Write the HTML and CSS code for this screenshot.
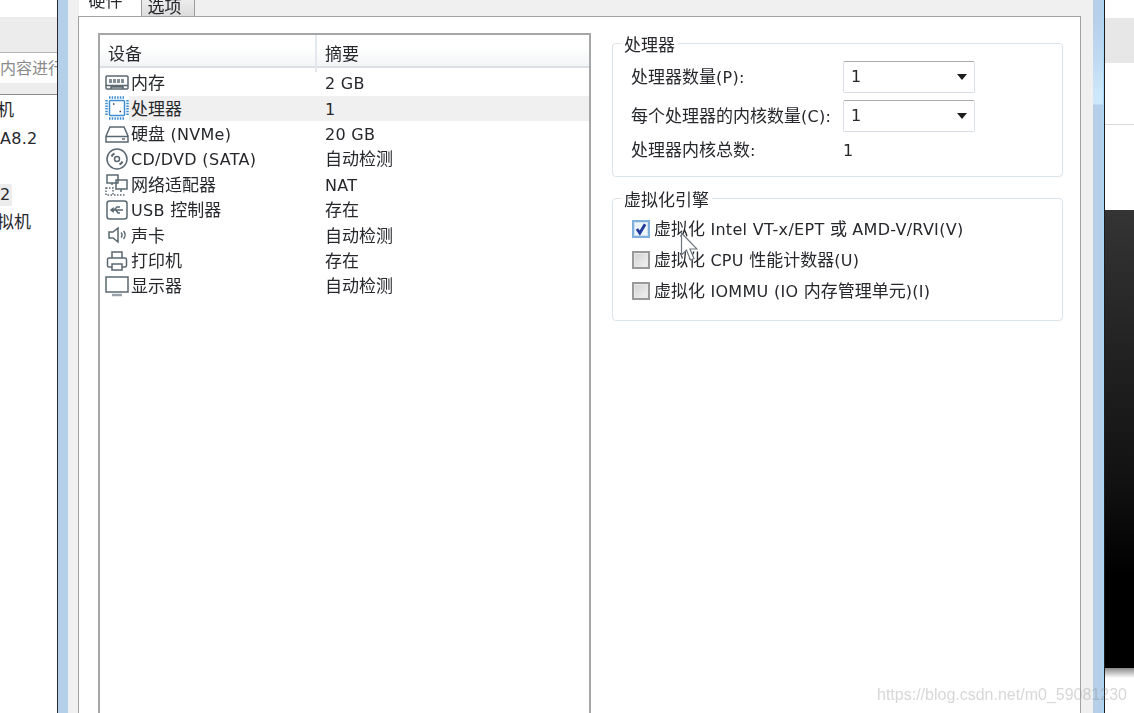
FILE: index.html
```html
<!DOCTYPE html>
<html lang="zh-CN">
<head>
<meta charset="utf-8">
<title>虚拟机设置</title>
<link rel="stylesheet" href="styles.css">
</head>
<body>
<div class="desktop">
  <aside class="left-win">
    <div class="lw-title"></div>
    <div class="lw-toolbar"></div>
    <div class="lw-search">内容进行</div>
    <div class="lw-strip"></div>
    <ul class="lw-tree">
      <li class="lw-clip">机</li>
      <li><span class="lat">A8.2</span></li>
      <li></li>
      <li><span class="lw-sel lat">2</span></li>
      <li class="lw-clip">拟机</li>
    </ul>
  </aside>

  <main class="dialog">
    <div class="dialog-inner">
      <div class="tabs">
        <div class="tab tab-active">硬件</div>
        <div class="tab tab-idle">选项</div>
      </div>
      <div class="page">
        <section class="list">
          <div class="list-head">
            <div class="hd hd-device">设备</div>
            <div class="hd hd-summary">摘要</div>
          </div>
          <div class="rows">
            <div class="row">
              <svg class="ico" viewBox="0 0 24 24"><rect x="1" y="5" width="22" height="13" rx="1"/><path d="M4 9h16M4 11h16" stroke-dasharray="3 1"/><path d="M1 14.500h22M6 18v-2h12v2"/></svg>
              <div class="cell name">内存</div><div class="cell"><span class="lat">2 GB</span></div>
            </div>
            <div class="row row-sel">
              <svg class="ico ico-blue" viewBox="0 0 24 24"><rect x="4.500" y="4.500" width="15" height="15" rx="1"/><path d="M4 1.500h16M4 22.500h16M1.500 4v16M22.500 4v16" stroke-width="2.500" stroke-dasharray="1.500 1.200"/><path d="M8 8h1.500M14.500 15.500h1.500" stroke="#33424d"/></svg>
              <div class="cell name">处理器</div><div class="cell"><span class="lat">1</span></div>
            </div>
            <div class="row">
              <svg class="ico" viewBox="0 0 24 24"><path d="M1 14 5 5h14l4 9v6H1zM1 14.500h22"/><path d="M17 17h3"/></svg>
              <div class="cell name">硬盘<span class="lat"> (NVMe)</span></div><div class="cell"><span class="lat">20 GB</span></div>
            </div>
            <div class="row">
              <svg class="ico" viewBox="0 0 24 24"><circle cx="12" cy="12" r="10"/><circle cx="12" cy="12" r="2.500"/><path d="M6.500 9.500a6 6 0 0 1 3-3M17.500 14.500a6 6 0 0 1-3 3" stroke-width="2"/></svg>
              <div class="cell name"><span class="lat">CD/DVD (SATA)</span></div><div class="cell">自动检测</div>
            </div>
            <div class="row">
              <svg class="ico" viewBox="0 0 24 24"><path d="M2 2h11v8H2zM7 10v2M11 7h11v9H11zM16 16v3"/><path d="M1 15h7v7H1zM9 22h12" stroke-dasharray="1.500 1.500"/></svg>
              <div class="cell name">网络适配器</div><div class="cell"><span class="lat">NAT</span></div>
            </div>
            <div class="row">
              <svg class="ico" viewBox="0 0 24 24"><rect x="2" y="3" width="20" height="18" rx="2.500"/><path d="M6 12h12M9 12l3-3h3M11 12l2 3h2M6 12l2-1.500v3z"/></svg>
              <div class="cell name"><span class="lat">USB </span>控制器</div><div class="cell">存在</div>
            </div>
            <div class="row">
              <svg class="ico" viewBox="0 0 24 24"><path d="M4 9h4l5-4v14l-5-4H4zM16 9.500a3.500 3.500 0 0 1 0 5M18.500 8a6 6 0 0 1 0 8"/></svg>
              <div class="cell name">声卡</div><div class="cell">自动检测</div>
            </div>
            <div class="row">
              <svg class="ico" viewBox="0 0 24 24"><path d="M7 9V3h10v6M7 18H4a1.500 1.500 0 0 1-1.500-1.500V10.500A1.500 1.500 0 0 1 4 9h16a1.500 1.500 0 0 1 1.500 1.500v6A1.500 1.500 0 0 1 20 18h-3M7 15h10v6H7z"/></svg>
              <div class="cell name">打印机</div><div class="cell">存在</div>
            </div>
            <div class="row">
              <svg class="ico" viewBox="0 0 24 24"><rect x="1" y="3" width="22" height="15"/><path d="M7 21h10" stroke-width="2.500" stroke="#9aa3aa"/></svg>
              <div class="cell name">显示器</div><div class="cell">自动检测</div>
            </div>
          </div>
        </section>

        <div class="side">
          <fieldset class="group group-cpu">
            <legend>处理器</legend>
            <div class="field">
              <span class="label">处理器数量<span class="lat">(P):</span></span>
              <div class="select"><span class="lat">1</span><i class="caret"></i></div>
            </div>
            <div class="field">
              <span class="label">每个处理器的内核数量<span class="lat">(C):</span></span>
              <div class="select"><span class="lat">1</span><i class="caret"></i></div>
            </div>
            <div class="field">
              <span class="label">处理器内核总数<span class="lat">:</span></span>
              <span class="lat">1</span>
            </div>
          </fieldset>

          <fieldset class="group group-virt">
            <legend>虚拟化引擎</legend>
            <div class="check">
              <span class="box box-on"><svg viewBox="0 0 12 12"><path d="M2.500 6 5 9.500 9.500 2"/></svg></span>
              <span>虚拟化<span class="lat"> Intel VT-x/EPT </span>或<span class="lat"> AMD-V/RVI(V)</span></span>
            </div>
            <div class="check">
              <span class="box"></span>
              <span>虚拟化<span class="lat"> CPU </span>性能计数器<span class="lat">(U)</span></span>
            </div>
            <div class="check">
              <span class="box"></span>
              <span>虚拟化<span class="lat"> IOMMU (IO </span>内存管理单元<span class="lat">)(I)</span></span>
            </div>
          </fieldset>
        </div>
      </div>
    </div>
  </main>

  <aside class="right-win">
    <div class="rw-a"></div>
    <div class="rw-b"></div>
    <div class="rw-c"></div>
    <div class="rw-d"></div>
    <div class="rw-e"></div>
    <div class="rw-f"></div>
  </aside>

  <svg class="cursor" viewBox="0 0 18 30"><path d="M1.500 1v22l5-5 4 10 3.500-1.500-4-9.500h7z"/></svg>
  <div class="watermark">https://blog.csdn.net/m0_59081230</div>
</div>
</body>
</html>
```

FILE: styles.css
```css
* { box-sizing: border-box; }
html, body { margin: 0; padding: 0; background: #fff; }
body { width: 1134px; height: 713px; overflow: hidden; }

.desktop {
  position: relative;
  display: flex;
  width: 1134px;
  height: 713px;
  overflow: hidden;
  font: 17px/22px "Noto Sans", "Noto Sans CJK SC", sans-serif;
  color: #26282c;
  filter: blur(0.4px);
}
.lat { font-family: "DejaVu Sans", "Noto Sans", sans-serif; font-size: 16px; letter-spacing: 0.3px; white-space: pre; }

/* left window */
.left-win { width: 58px; flex: none; background: #fff; border-right: 1px solid #2a2a2a; overflow: hidden; }
.lw-title { height: 17px; }
.lw-toolbar { height: 36px; background: #ececec; border-bottom: 1px solid #b4b4b4; }
.lw-search { height: 30px; line-height: 30px; color: #8a8a8a; white-space: nowrap; overflow: hidden; font-size: 16px; }
.lw-strip { height: 12px; background: #ededed; border-bottom: 1px solid #8c8c8c; }
.lw-tree { list-style: none; margin: 0; padding: 1px 0 0; }
.lw-tree li { height: 28px; line-height: 28px; white-space: nowrap; }
.lw-sel { display: inline-block; width: 12px; height: 22px; line-height: 22px; background: #ededed; }
.lw-clip { text-indent: -3px; }

/* dialog frame */
.dialog {
  flex: none;
  width: 1046px;
  background: #f0f0f0;
  border-left: 10px solid #b6cfe9;
  border-right: 1px solid #9fd9fb;
  padding: 0 12px 0 10px;
  position: relative;
  background-clip: padding-box;
}
.dialog::after {
  content: "";
  position: absolute;
  top: 0; bottom: 0; right: 0;
  width: 10px;
  background: linear-gradient(#b7d0ea 0 20px, #c0daf2 60px, #cde8fa 95px, #cde8fa 104px, #b6cfe9 105px);
}
.dialog-inner { margin-right: 10px; height: 100%; }

.tabs { display: flex; align-items: flex-end; height: 16px; padding-left: 1px; }
.tab { flex: none; height: 24px; text-align: center; line-height: 22px; font-size: 17px; }
.tab-active { width: 62px; background: #fff; padding-right: 9px; height: 26px; }
.tab-idle {
  width: 54px;
  background: linear-gradient(#f4f4f4, #dcdcdc);
  border: 1px solid #9c9c9c;
  border-bottom: 0;
  padding-right: 7px;
  line-height: 28px;
}

.page {
  display: flex;
  align-items: flex-start;
  gap: 21px;
  height: 700px;
  padding: 17px 17px 0 19px;
  background: #fff;
  border: 1px solid #a2a2a2;
  border-top: 0;
  border-bottom: 0;
  box-shadow: inset 0 1px 0 #a2a2a2;
}

/* device list */
.list {
  flex: none;
  width: 493px;
  height: 690px;
  border: 2px solid #a4a6a8;
}
.list-head {
  display: grid;
  grid-template-columns: 217px 1fr;
  height: 33px;
  background: linear-gradient(#fff 0 40%, #f2f4f6);
  border-bottom: 2px solid #d9dfe4;
}
.hd { line-height: 37px; font-size: 17px; }
.hd-device { padding-left: 8px; border-right: 2px solid #e4e8ec; }
.hd-summary { padding-left: 8px; }
.rows { padding-top: 2.300px; }
.row {
  display: grid;
  grid-template-columns: 29px 196px 1fr;
  grid-template-rows: 25.4px;
  height: 25.4px;
}
.cell { line-height: 26.500px; height: 25.4px; white-space: nowrap; }
.name { padding-left: 2px; }
.row-sel .cell { background: #f0f0f0; }
.ico {
  align-self: center;
  width: 24px; height: 24px;
  margin-left: 5px;
  fill: none;
  stroke: #5a6872;
  stroke-width: 1.500;
}
.ico-blue { stroke: #3f8ed2; }

/* side groups */
.side { flex: none; width: 451px; display: flex; flex-direction: column; gap: 11px; }
.group {
  margin: 0;
  min-width: 0;
  border: 1px solid #dbe2e8;
  border-radius: 4px;
  padding: 8px 18px 14px 18px;
  display: flex;
  flex-direction: column;
}
.group legend { margin-left: -10px; padding: 4px 3px 0; line-height: 16px; font-size: 17px; }
.group-cpu { gap: 7px; }
.group-virt { gap: 9px; padding-top: 10px; padding-bottom: 18px; }

.field { display: flex; align-items: center; }
.label { flex: none; width: 212px; white-space: nowrap; }
.select {
  flex: none;
  display: flex;
  align-items: center;
  justify-content: space-between;
  width: 132px;
  height: 32px;
  padding: 0 7px 0 7px;
  background: #fff;
  border: 1px solid #d9dfe4;
  border-top-color: #a9abad;
  border-radius: 2px;
}
.caret { width: 0; height: 0; border: 5.500px solid transparent; border-top: 6px solid #1c1c1c; border-bottom: 0; }

.check { display: flex; align-items: center; gap: 4px; height: 22px; white-space: nowrap; }
.box {
  flex: none;
  width: 18px; height: 18px;
  margin-left: 1px;
  border: 2px solid #999;
  background: linear-gradient(135deg, #d2d2d2, #f2f2f2);
  box-shadow: inset 0 0 0 1px #e8e8e8;
}
.box-on { border-color: #7fb0dc; background: #eef5fb; box-shadow: inset 0 0 0 1px #cfe2f2; }
.box svg { display: block; width: 14px; height: 14px; fill: none; stroke: #1f3b9c; stroke-width: 2.400; }

/* right window */
.right-win { flex: 1; min-width: 0; border-left: 1px solid #1e1e1e; display: flex; flex-direction: column; }
.rw-a { height: 18px; background: #fff; }
.rw-b { height: 45px; background: #e7e7e7; }
.rw-c { height: 62px; background: #fff; border-bottom: 1px solid #dadada; }
.rw-d { height: 85px; background: #fff; }
.rw-e { height: 458px; background: linear-gradient(#343434, #111 60%, #000 80%); }
.rw-f { flex: 1; background: linear-gradient(#8a8a8a, #fff 10px); }

/* overlays */
.cursor { position: absolute; left: 680px; top: 232px; width: 18px; height: 30px; fill: #fff; stroke: #6d7680; stroke-width: 1.200; }
.watermark {
  position: absolute;
  left: 877px; top: 684px;
  font: 16px/22px "Liberation Sans", sans-serif;
  color: rgba(130, 130, 130, 0.32);
  white-space: nowrap;
}
```
